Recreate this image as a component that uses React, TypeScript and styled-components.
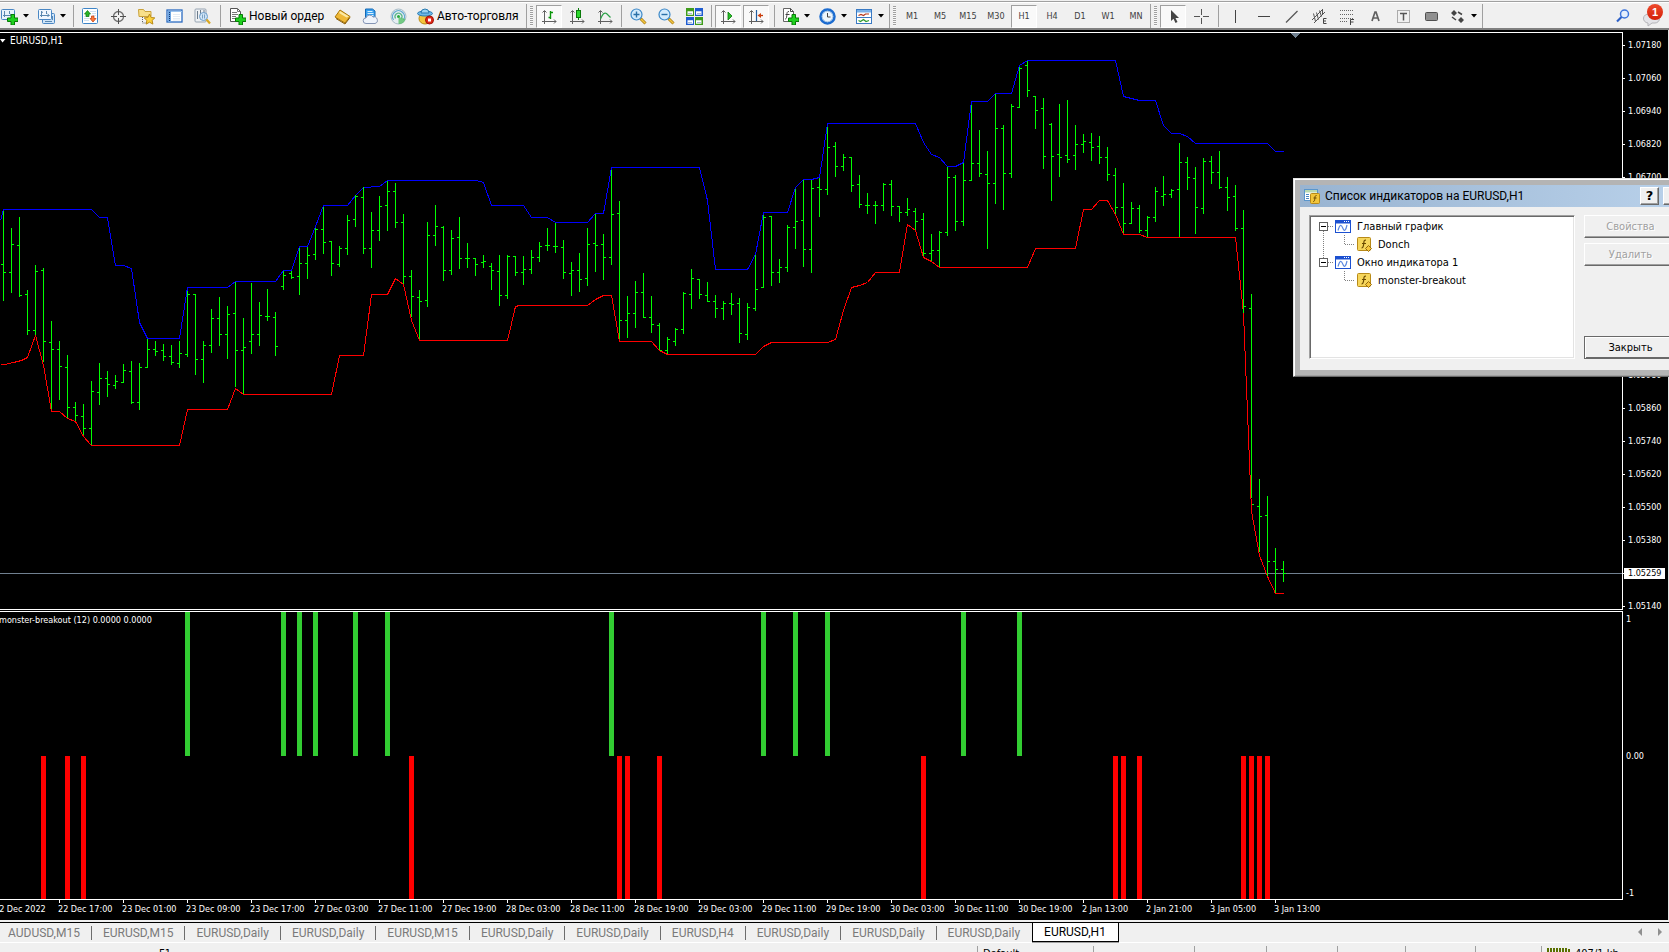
import React from "react";
import styled, { createGlobalStyle, css } from "styled-components";

const UI_FONT = `"DejaVu Sans Condensed", "DejaVu Sans", sans-serif`;
const TEXT_FONT = `Roboto, "Open Sans", sans-serif`;

const GlobalStyle = createGlobalStyle`
  *, *::before, *::after { box-sizing: border-box; }
  html, body { margin: 0; padding: 0; background: #f0f0f0; }
  body { font-family: ${UI_FONT}; font-size: 11px; color: #000; overflow: hidden; }
  button { font-family: inherit; font-size: inherit; color: inherit; }
  ul { list-style: none; margin: 0; padding: 0; }
  svg { display: block; flex: none; }
`;

/* ---------- chart data ---------- */

const BAR_STEP = 8;
const barX = (k: number) => 3 + BAR_STEP * k;

// high, low, open, close in plot rows
const BARS: number[][] = [
  [211,301,264,272],[228,293,272,244],[217,297,245,295],[290,335,294,330],[265,335,330,271],[268,362,270,341],
  [321,409,342,349],[341,400,349,366],[355,418,367,407],[402,421,407,415],[404,435,416,428],[381,445,428,391],
  [363,405,392,378],[371,397,378,384],[375,389,385,381],[364,383,382,370],[361,404,371,402],[363,410,402,367],
  [339,368,367,349],[341,356,349,351],[344,361,350,356],[345,365,356,362],[341,368,363,353],[291,357,354,294],
  [294,375,294,359],[341,383,359,345],[309,353,345,318],[297,346,318,334],[306,359,334,314],[282,387,313,350],
  [318,394,350,347],[283,354,341,334],[302,346,334,315],[289,321,316,316],[312,356,317,346],[271,290,286,275],
  [271,279,273,277],[248,295,276,263],[247,279,263,255],[228,260,254,229],[207,254,229,242],[241,276,241,263],
  [246,267,264,248],[215,255,248,220],[195,227,219,196],[187,254,197,248],[212,268,248,230],[196,241,230,206],
  [181,231,205,191],[183,228,191,222],[214,284,222,276],[270,317,276,296],[290,339,297,301],[222,307,300,235],
  [205,246,235,226],[226,281,227,270],[230,275,270,238],[217,269,237,258],[243,268,258,258],[258,276,258,264],
  [255,268,262,261],[263,290,266,270],[255,306,271,295],[255,299,295,256],[256,276,256,272],[256,285,272,269],
  [250,274,269,257],[242,262,257,246],[228,251,245,245],[223,253,246,246],[240,279,247,272],[262,296,273,270],
  [253,292,270,279],[228,286,278,244],[214,272,243,245],[234,280,244,257],[170,265,257,214],[201,339,213,320],
  [296,338,320,313],[281,328,313,292],[273,318,292,317],[296,333,317,324],[323,350,325,350],[337,354,350,339],
  [328,346,341,329],[292,334,329,293],[269,309,294,278],[279,299,279,294],[282,302,295,301],[295,318,301,308],
  [301,320,308,303],[293,315,303,304],[298,343,303,333],[303,340,334,307],[255,311,308,289],[215,288,287,217],
  [216,286,216,272],[259,283,272,267],[225,272,267,227],[189,249,227,221],[180,267,220,249],[180,273,249,188],
  [178,217,187,189],[127,195,189,147],[142,177,146,166],[154,171,166,157],[157,192,157,185],[175,208,184,204],
  [193,214,205,205],[201,224,205,205],[183,211,205,184],[180,216,184,206],[206,222,206,212],[198,216,212,209],
  [208,230,211,221],[213,256,219,253],[234,261,253,250],[231,267,250,232],[167,236,232,177],[175,231,177,221],
  [163,226,221,180],[105,181,180,163],[130,177,163,173],[151,249,174,183],[94,204,183,128],[125,210,128,173],
  [104,178,173,106],[67,108,107,68],[61,97,65,90],[96,129,96,110],[98,169,108,156],[123,201,124,156],
  [104,177,154,157],[100,163,155,159],[125,170,155,144],[134,153,144,141],[133,161,142,147],[136,164,146,157],
  [147,181,157,174],[168,214,175,207],[183,233,207,223],[202,224,223,208],[205,233,208,230],[216,237,230,217],
  [187,222,217,191],[176,206,196,194],[189,198,194,190],[143,237,189,162],[157,190,162,177],[167,234,178,207],
  [158,214,208,161],[156,184,161,172],[151,189,172,187],[177,211,187,197],[185,231,196,228],[210,313,228,306],
  [294,498,308,504],[479,552,506,516],[496,576,515,561],[548,593,561,569],[561,582,569,573],
];

const UPPER: number[][] = [
  [0,220],[3,209],[91,209],[99,217],[107,217],[115,265],[123,265],[131,268],[139,322],[147,338],[179,338],[187,287],
  [227,287],[235,281],[275,281],[283,270],[291,270],[299,246],[307,246],[315,226],[323,205],[347,205],[355,195],
  [363,187],[379,186],[387,180],[476,180],[483,182],[491,205],[523,205],[531,217],[547,217],[555,222],[587,222],
  [595,213],[603,213],[611,167],[699,167],[707,200],[715,269],[747,269],[755,254],[763,212],[787,212],[795,187],
  [803,179],[811,179],[819,177],[827,123],[915,123],[923,142],[931,154],[939,157],[947,166],[955,166],[963,162],
  [971,101],[987,101],[995,93],[1011,93],[1019,65],[1027,60],[1115,60],[1123,96],[1139,100],[1155,100],[1163,125],
  [1171,133],[1179,133],[1187,136],[1195,143],[1267,143],[1275,151],[1283,151],
];

const LOWER: number[][] = [
  [0,364],[4,364],[13,362],[21,360],[27,357],[35,335],[43,365],[51,411],[59,411],[67,418],[75,421],[83,436],[91,445],
  [179,445],[187,409],[227,409],[235,388],[243,394],[331,394],[339,355],[363,355],[371,294],[387,294],[395,278],
  [403,284],[411,320],[419,340],[507,340],[515,306],[519,305],[587,305],[595,299],[603,295],[611,295],[619,341],
  [651,341],[659,350],[667,354],[755,354],[763,346],[771,342],[827,342],[835,339],[843,310],[851,287],[859,285],
  [867,282],[875,272],[899,272],[907,224],[915,230],[923,257],[931,261],[939,267],[1027,267],[1035,248],[1075,248],
  [1083,209],[1091,209],[1099,200],[1107,200],[1115,214],[1123,234],[1139,234],[1147,237],[1235,237],[1243,313],
  [1251,511],[1259,555],[1267,576],[1275,593],[1283,593],
];

const UP_SIGNALS = [23, 35, 37, 39, 44, 48, 76, 95, 99, 103, 120, 127];
const DOWN_SIGNALS = [5, 8, 10, 51, 77, 78, 82, 115, 139, 140, 142, 155, 156, 157, 158];

const PRICES = [
  "1.07180","1.07060","1.06940","1.06820","1.06700","1.06580","1.06460","1.06340","1.06220",
  "1.06100","1.05980","1.05860","1.05740","1.05620","1.05500","1.05380","1.05259","1.05140",
];
const CURRENT_PRICE = "1.05259";

const TIMES = [
  "22 Dec 2022","22 Dec 17:00","23 Dec 01:00","23 Dec 09:00","23 Dec 17:00","27 Dec 03:00","27 Dec 11:00",
  "27 Dec 19:00","28 Dec 03:00","28 Dec 11:00","28 Dec 19:00","29 Dec 03:00","29 Dec 11:00","29 Dec 19:00",
  "30 Dec 03:00","30 Dec 11:00","30 Dec 19:00","2 Jan 13:00","2 Jan 21:00","3 Jan 05:00","3 Jan 13:00",
];

const TABS = [
  "AUDUSD,M15","EURUSD,M15","EURUSD,Daily","EURUSD,Daily","EURUSD,M15","EURUSD,Daily","EURUSD,Daily",
  "EURUSD,H4","EURUSD,Daily","EURUSD,Daily","EURUSD,Daily","EURUSD,H1",
];

const TIMEFRAMES = ["M1", "M5", "M15", "M30", "H1", "H4", "D1", "W1", "MN"];

/* ---------- layout ---------- */

const Page = styled.div`
  position: relative;
  display: flex;
  flex-direction: column;
  height: 100vh;
  overflow: hidden;
  background: #f0f0f0;
`;

const Toolbar = styled.header`
  flex: none;
  display: flex;
  height: 30px;
  padding-top: 3px;
  background: #f0f0f0;
  border-top: 1px solid #f0f0f0;
  border-bottom: 2px solid #808080;
  box-shadow: inset 0 1px #a0a0a0, inset 0 2px #fff;
`;

const Group = styled.div<{ $first?: boolean }>`
  flex: none;
  display: flex;
  align-items: center;
  border-right: 1px solid #a0a0a0;
  margin-left: ${(p) => (p.$first ? "-3px" : "0")};
`;

const Gripper = styled.span`
  width: 3px;
  height: 20px;
  margin: 0 2px 0 3px;
  background: repeating-linear-gradient(#a0a0a0 0 1px, #f8f8f8 1px 2px);
`;

const Separator = styled.span<{ $w: number }>`
  display: flex;
  justify-content: center;
  width: ${(p) => p.$w}px;
  height: 22px;
  &::before { content: ""; width: 1px; background: #a0a0a0; }
`;

const bare = css`
  display: flex;
  align-items: center;
  padding: 0;
  border: 0;
  background: none;
`;

const ToolButton = styled.button<{ $pressed?: boolean }>`
  ${bare}
  flex: none;
  justify-content: center;
  width: 26px;
  height: 23px;
  margin: 0 1px;
  font-size: 9px;
  color: #404040;
  ${(p) => p.$pressed && css`
    background: #f9f9f9;
    border: 1px solid;
    border-color: #a0a0a0 #fff #fff #a0a0a0;
  `}
`;

const DropButton = styled.button`
  ${bare}
  flex: none;
  width: 37px;
  height: 23px;
  padding-left: 4px;
  gap: 4px;
`;

const TextButton = styled.button<{ $w: number }>`
  ${bare}
  flex: none;
  width: ${(p) => p.$w}px;
  height: 23px;
  padding-left: 5px;
  gap: 3px;
  font-family: ${TEXT_FONT};
  font-size: 12px;
  white-space: nowrap;
`;

const ToolbarEnd = styled.div`
  display: flex;
  align-items: center;
  gap: 6px;
  margin-left: auto;
  padding-right: 6px;
`;

const Badged = styled.button`
  ${bare}
  position: relative;
  width: 21px;
  height: 24px;
`;

const Badge = styled.span`
  position: absolute;
  top: 0;
  right: 0;
  width: 16px;
  height: 16px;
  border-radius: 8px;
  background: linear-gradient(#ee4a2c, #d42008);
  color: #fff;
  font: bold 11px/16px "Liberation Sans", sans-serif;
  text-align: center;
`;

const ChartWindow = styled.main`
  flex: 1;
  min-height: 0;
  display: grid;
  grid-template-columns: minmax(0, 1fr) 45px;
  grid-template-rows: 580px minmax(0, 1fr) 20px;
  background: #000;
  color: #fff;
  font-size: 9px;
  border-right: 1px solid #e3e3e3;
  overflow: hidden;
`;

const PricePlot = styled.section`
  position: relative;
  margin-top: 2px;
  border: solid #fff;
  border-width: 1px 1px 1px 0;
  overflow: hidden;
`;

const SignalPlot = styled.section`
  position: relative;
  margin-top: 1px;
  border: solid #fff;
  border-width: 1px 1px 1px 0;
  overflow: hidden;
`;

const PlotSvg = styled.svg`
  width: 100%;
  height: 100%;
`;

const SymbolCaption = styled.button`
  ${bare}
  position: absolute;
  top: 1px;
  left: 0;
  gap: 4px;
  font-size: 10px;
  line-height: 13px;
`;

const SignalCaption = styled.span`
  position: absolute;
  top: 2px;
  left: -1px;
  line-height: 13px;
  white-space: nowrap;
`;

const PriceAxis = styled.ul`
  margin-top: -1px;
`;

const PriceRow = styled.li<{ $current: boolean }>`
  display: flex;
  align-items: center;
  height: 33px;
  &::before { content: ""; width: 2px; height: 1px; background: #fff; }
  span {
    margin-left: -1px;
    padding: 0 4px;
    line-height: 11px;
    ${(p) => p.$current && css`background: #fff; color: #000;`}
  }
`;

const SignalAxis = styled.div`
  display: flex;
  flex-direction: column;
  justify-content: space-between;
  padding: 3px 0 1px 3px;
  line-height: 12px;
`;

const TimeAxis = styled.ul`
  grid-column: 1 / -1;
  display: flex;
  margin-left: -5px;
  overflow: hidden;
`;

const TimeMark = styled.li`
  flex: none;
  width: 64px;
  white-space: nowrap;
  line-height: 12px;
  &::before { content: ""; display: block; width: 1px; height: 3px; background: #fff; }
  span { display: block; margin-left: -1px; }
`;

const TabBar = styled.nav`
  flex: none;
  display: flex;
  height: 23px;
  padding: 0 6px 0 0;
  background: linear-gradient(#f0f0f0 0 2px, #000 2px 3px, #f0f0f0 3px 22px, #fff 22px);
  font-family: ${TEXT_FONT};
  font-size: 12px;
`;

const Tab = styled.button<{ $active: boolean; $last: boolean }>`
  ${bare}
  height: 19px;
  margin-top: 3px;
  padding: 0 12px 0 11px;
  color: #7a7a7a;
  white-space: nowrap;
  &::after {
    content: "";
    width: 1px;
    height: 14px;
    margin: 0 -12px 0 11px;
    background: ${(p) => (p.$last ? "transparent" : "#6d6d6d")};
  }
  &:first-child { padding-left: 8px; }
  ${(p) => p.$active && css`
    padding: 0 12px 0 11px;
    color: #000;
    background: #fff;
    border: solid #000;
    border-width: 0 1px 1px 1px;
    box-shadow: 0 1px #a0a0a0;
    &::after { display: none; }
  `}
`;

const TabScroll = styled.div`
  display: flex;
  align-items: center;
  gap: 12px;
  margin-left: auto;
  button { ${bare} }
`;

const StatusBar = styled.footer`
  flex: none;
  display: flex;
  height: 9px;
  padding-top: 3px;
  overflow: hidden;
`;

const StatusCell = styled.div<{ $w?: number; $pad: number }>`
  flex: ${(p) => (p.$w ? `0 0 ${p.$w}px` : "1 1 0")};
  display: flex;
  gap: 5px;
  height: 18px;
  padding: 2px 0 0 ${(p) => p.$pad}px;
  line-height: 12px;
  border-left: 1px solid ${(p) => (p.$w ? "#a0a0a0" : "transparent")};
  white-space: nowrap;
`;

/* ---------- indicator list window ---------- */

const Dialog = styled.div`
  position: absolute;
  top: 178px;
  right: -24px;
  display: flex;
  flex-direction: column;
  width: 400px;
  padding: 6px;
  background: #b4b4b4;
  border: 1px solid;
  border-color: #e3e3e3 #696969 #696969 #e3e3e3;
  box-shadow: inset 1px 1px #fff, inset -1px -1px #a0a0a0;
`;

const TitleBar = styled.div`
  display: flex;
  align-items: center;
  gap: 4px;
  height: 22px;
  padding: 0 4px;
  background: linear-gradient(90deg, #99b4d1, #b9d1ea);
  font-family: ${TEXT_FONT};
  font-size: 12px;
  h2 { flex: 1; margin: 0; font: inherit; }
`;

const raised = css`
  background: #f0f0f0;
  border: 1px solid;
  border-color: #fff #696969 #696969 #fff;
  box-shadow: inset -1px -1px #a0a0a0;
`;

const CaptionButton = styled.button`
  ${raised}
  width: 19px;
  height: 18px;
  padding: 0;
  font: bold 13px/14px "DejaVu Sans", sans-serif;
`;

const DialogBody = styled.div`
  display: flex;
  gap: 9px;
  padding: 8px 9px 11px;
  background: #f0f0f0;
`;

const Tree = styled.ul`
  flex: 1;
  height: 144px;
  padding: 1px 0 0 8px;
  background: #fff;
  border: 1px solid;
  border-color: #a0a0a0 #fff #fff #a0a0a0;
  box-shadow: inset 1px 1px #696969, inset -1px -1px #e3e3e3;
`;

const TreeRow = styled.li`
  display: flex;
  align-items: center;
  height: 18px;
  white-space: nowrap;
`;

const TreeLabel = styled.span`
  margin-left: 6px;
`;

const DialogButtons = styled.div`
  display: flex;
  flex-direction: column;
  gap: 5px;
  width: 93px;
`;

const DialogButton = styled.button<{ $default?: boolean }>`
  ${raised}
  height: 23px;
  padding: 0;
  &:disabled { color: #a0a0a0; text-shadow: 1px 1px #fff; }
  ${(p) => p.$default && css`
    margin-top: auto;
    border-color: #696969;
    box-shadow: inset 1px 1px #fff, inset -1px -1px #696969;
  `}
`;

/* ---------- icons ---------- */

const Ic = ({ children, w = 17 }: { children: React.ReactNode; w?: number }) => (
  <svg width={w} height={17} viewBox={`0 0 ${w} 17`} fill="none" aria-hidden="true">{children}</svg>
);

const Arrow = () => (
  <svg width="7" height="4" viewBox="0 0 7 4" aria-hidden="true"><path d="M1 0h6L4 3.5z" fill="#000" /></svg>
);

const Plus = () => (
  <path d="M10 6.500h3.500v3.500h3.500v3.500h-3.500v3.500H10v-3.500H6.500V10H10z" fill="#1fd01f" stroke="#067a06" />
);

const Axes = ({ children }: { children?: React.ReactNode }) => (
  <Ic>
    <path d="M3.500 16V3M1 13.500h14M1.500 4.500l2-2 2 2M13 11.500l2 2-2 2" stroke="#606060" />
    {children}
  </Ic>
);

const NewChartIcon = () => (
  <Ic>
    <rect x=".5" y="1.500" width="13" height="10" rx="1" fill="#eaf4fd" stroke="#4a87c4" />
    <path d="M3.500 3v6M2 7.500h9M9 6l2 1.500M8.500 3v3" stroke="#5a88b0" />
    <Plus />
  </Ic>
);
const WindowsIcon = () => (
  <Ic>
    <rect x="4.500" y="5.500" width="12" height="10" rx="1" fill="#cfe4f8" stroke="#4a87c4" />
    <rect x=".5" y="1.500" width="13" height="10" rx="1" fill="#f0f8ff" stroke="#4a87c4" />
    <path d="M3.500 3v6M2 7.500h9M9.500 6l2 1.500-2 1M3 5l2-1M8.500 3v3M7 13.500h7M14.500 8v4" stroke="#5a88b0" />
  </Ic>
);
const MarketIcon = () => (
  <Ic>
    <rect x=".5" y=".5" width="15" height="15" rx="1" fill="#fff" stroke="#3d85c8" />
    <path d="M8 3.500h6M10 5.500h4M2 8.500h4M2 10.500h5M2 12.500h5M11 7.500h3" stroke="#cfe0f0" />
    <path d="M2.500 6L5.500 2.500l3 3.500h-1.500v2.500h-3V6z" fill="#28b428" stroke="#0b7a0b" strokeWidth=".7" />
    <path d="M8 10.500h1.500V8h2.500v2.500h2L11 14z" fill="#ff7a3c" stroke="#c03a08" strokeWidth=".7" />
  </Ic>
);
const TargetIcon = () => (
  <Ic>
    <circle cx="8.500" cy="8.500" r="5" stroke="#707070" strokeWidth="1.300" />
    <path d="M8.500 1v6M8.500 10v6M1 8.500h6M10 8.500h6" stroke="#505050" />
  </Ic>
);
const FolderIcon = () => (
  <Ic>
    <path d="M.5 1.500h5l1.500 2h6v5h-12z" fill="#f8e08a" stroke="#c9a23c" />
    <path d="M4.500 9v6h4" stroke="#606060" strokeDasharray="1 1" />
    <path d="M11.500 6l1.700 3.500 3.600.4-2.700 2.500.8 3.700-3.400-1.900-3.300 1.900.7-3.700L6.200 9.900l3.700-.4z" fill="#fbd13c" stroke="#b98a15" />
  </Ic>
);
const NavigatorIcon = () => (
  <Ic>
    <rect x="1" y="2" width="15" height="12" fill="#fff" stroke="#2a6ac0" strokeWidth="1.300" />
    <path d="M2 3.500h14" stroke="#9cc4ee" />
    <rect x="2" y="3" width="3" height="11" fill="#6ea6e2" />
    <path d="M3.500 4v9" stroke="#123a78" strokeDasharray="1 1" />
    <path d="M7 6.500h7M7 8.500h7M7 10.500h7M7 12h7" stroke="#e4ecf4" />
  </Ic>
);
const TesterIcon = () => (
  <Ic>
    <rect x="1" y="1" width="11" height="13" rx="1" fill="#eef1f4" stroke="#97a4b2" />
    <path d="M3.500 3v8M6.500 2v6M10 2v5" stroke="#6c7c8c" />
    <circle cx="9.500" cy="8.500" r="4" fill="#cfe6fa" fillOpacity=".9" stroke="#6c9cc8" />
    <path d="M8.500 6.500v4M10.500 6.500v4" stroke="#7aa2c4" />
    <path d="M12.500 11.500l3.500 4" stroke="#d9a823" strokeWidth="2.200" />
  </Ic>
);
const OrderIcon = () => (
  <Ic>
    <path d="M1.500.5h7l3 3v10h-10z" fill="#fff" stroke="#555" />
    <path d="M3 4.500h5M3 6.500h6M3 8.500h4M3 10.500h4M8.500.5v3h3" stroke="#777" />
    <Plus />
  </Ic>
);
const GoldIcon = () => (
  <Ic>
    <path d="M1 9l5-7 10 6.500-5 6.500z" fill="#efb836" stroke="#a87608" />
    <path d="M2 10.500L11 16l5-6.500" stroke="#8a5c04" />
    <path d="M6 3l9 5.500-2.500 1L5 5z" fill="#fde9a2" />
  </Ic>
);
const CloudIcon = () => (
  <Ic>
    <path d="M3.500 1h7l2.500 2v6.500h-9.500z" fill="#38a0f0" stroke="#1468b4" />
    <path d="M5.500 3.500h5M5.500 5.500h6M5.500 7.500h6" stroke="#d8f0ff" />
    <path d="M4 15.500a2.800 2.800 0 010-5.600 3.800 3.800 0 017-.8 3.300 3.300 0 012 6.400z" fill="#eef3fb" stroke="#8494b4" />
  </Ic>
);
const SignalIcon = () => (
  <Ic>
    <circle cx="8.500" cy="8.500" r="7.500" fill="#e6eef2" stroke="#a8bcc8" />
    <path d="M3.500 12a6 6 0 1110 0" stroke="#62aad0" strokeWidth="1.300" />
    <path d="M5.500 10.500a3.500 3.500 0 116 0" stroke="#5cb88c" strokeWidth="1.300" />
    <circle cx="8.500" cy="8.500" r="1.500" fill="#28a83c" />
    <path d="M8.500 9v7c4 0 6-2 7-5z" fill="#58c068" fillOpacity=".8" />
  </Ic>
);
const AutoIcon = () => (
  <Ic>
    <ellipse cx="8" cy="10.500" rx="6" ry="5.500" fill="#f4c43c" stroke="#b98a15" />
    <ellipse cx="8" cy="5.500" rx="7.500" ry="2.500" fill="#6cb8e8" stroke="#2a7ab0" />
    <path d="M4 5a4 4 0 018 0z" fill="#9ad4f4" stroke="#2a7ab0" />
    <circle cx="12.500" cy="12" r="4" fill="#e02818" stroke="#a01408" />
    <rect x="11" y="10.500" width="3" height="3" fill="#fff" />
  </Ic>
);
const Magnifier = ({ plus }: { plus?: boolean }) => (
  <Ic>
    <path d="M10.500 10.500l5 5" stroke="#a87a10" strokeWidth="3" />
    <path d="M11 11l4.300 4.300" stroke="#f2c744" strokeWidth="1.600" />
    <circle cx="6.500" cy="6.500" r="5.500" fill="#d2eafc" stroke="#3c88c8" strokeWidth="1.200" />
    <path d={plus ? "M3.500 6.500h6M6.500 3.500v6" : "M3.500 6.500h6"} stroke="#2a70a8" strokeWidth="1.400" />
  </Ic>
);
const TileIcon = () => (
  <Ic>
    <rect x="0" y="0" width="8" height="8" fill="#3f9c1c" /><rect x="9" y="0" width="8" height="8" fill="#1f5cd0" />
    <rect x="0" y="9" width="8" height="8" fill="#1f5cd0" /><rect x="9" y="9" width="8" height="8" fill="#3f9c1c" />
    <path d="M1.500 5h5.500M10 5h5.500M1.500 14h5.500M10 14h5.500" stroke="#fff" strokeWidth="3.500" />
    <path d="M2 5.500h4M11 5.500h4M2 14.500h4M11 14.500h4" stroke="#a8bcd8" />
  </Ic>
);
const AddIndicatorIcon = () => (
  <Ic>
    <path d="M1.500.5h7l3 3v10h-10z" fill="#fff" stroke="#666" />
    <path d="M7 3.500c-2 0-2 1-2.200 4S4 11 3 11M3.500 6.500h4M8.500.5v3h3" stroke="#444" />
    <Plus />
  </Ic>
);
const ClockIcon = () => (
  <Ic>
    <circle cx="8.500" cy="8.500" r="7" fill="#eef6fd" stroke="#1c6cd0" strokeWidth="2.500" />
    <circle cx="8.500" cy="8.500" r="5.300" stroke="#90b8e0" strokeWidth=".8" />
    <path d="M8.500 5v4h3" stroke="#444" />
  </Ic>
);
const TemplateIcon = () => (
  <Ic>
    <rect x=".5" y="1.500" width="15" height="14" fill="#fff" stroke="#3a7ac4" />
    <rect x="1" y="2" width="14" height="2.500" fill="#7ab0e8" />
    <path d="M1 9.500h14" stroke="#3a7ac4" />
    <path d="M2.500 7.500l2.500-1 2.500 1 2-1.500h3.500" stroke="#b43418" strokeWidth="1.200" />
    <path d="M2.500 12.500l2 1 3-2 2.500 2 3-1" stroke="#2c9a2c" strokeWidth="1.200" />
  </Ic>
);
const ChannelIcon = () => (
  <Ic>
    <path d="M1 12L12 1M3 15L14 4M2.500 5.500l2 8M5.500 4.500l2 7M8.500 2.500l2 6M11.500 1v6" stroke="#555" />
    <path d="M15.500 10.500h-3v5h3M12.500 13h2.500" stroke="#444" />
  </Ic>
);
const FiboIcon = () => (
  <Ic>
    <path d="M1 2.500h13M1 6.500h13M1 10.500h13M1 13.500h8" stroke="#666" strokeDasharray="1 1" />
    <path d="M11.500 17v-5.500h3.500M11.500 14h3" stroke="#444" />
  </Ic>
);
const LabelIcon = () => (
  <Ic>
    <rect x="2.500" y="2.500" width="12" height="12" stroke="#666" strokeDasharray="1 1" />
    <path d="M5 5.500h7M8.500 5.500v7" stroke="#555" strokeWidth="1.500" />
  </Ic>
);
const LetterIcon = () => (
  <Ic><path d="M5 13l3-9h1l3 9M6 10h5" stroke="#606060" strokeWidth="1.700" /></Ic>
);
const ShapesIcon = () => (
  <Ic>
    <path d="M5 2l3 3-3 3-3-3zM12 9l3 3-3 3-3-3z" fill="#444" />
    <path d="M3 9l4 3M9 4l4 2.500" stroke="#444" strokeWidth="1.500" />
  </Ic>
);
const DialogIcon = () => (
  <Ic>
    <rect x=".5" y="1.500" width="13" height="11" fill="#fff" stroke="#5a96cc" />
    <rect x="1" y="2" width="12" height="2.500" fill="#b8d8b0" />
    <path d="M2 6.500h3M2 8.500h3M2 10.500h3" stroke="#4a87c4" />
    <rect x="6.500" y="5.500" width="9" height="10" rx="1" fill="#f2c63c" stroke="#b88a18" />
    <path d="M12.500 7.500c-1.500 0-1.500 1-1.700 3s-.3 3-1.500 3M9.500 10h3" stroke="#6a4a00" />
  </Ic>
);
const WindowIcon = () => (
  <Ic w={16}>
    <rect x=".5" y="2.500" width="15" height="12" fill="#fff" stroke="#1c50d0" />
    <rect x="0" y="2" width="16" height="3.500" fill="#1c50d0" />
    <path d="M9 3.500h6" stroke="#fff" strokeDasharray="1 1" />
    <path d="M3 12.500c2-7 3.500-6 5-2s3 1 4-3.500" stroke="#5c88e0" strokeWidth="1.200" />
  </Ic>
);
const FunctionIcon = () => (
  <Ic w={15}>
    <rect x=".5" y="1.500" width="13" height="13" rx="1" fill="#f6d65c" stroke="#b88a18" />
    <path d="M9 4c-2 0-2 1-2.300 4S6 12 4.500 12M5 7.500h4" stroke="#6a4a00" strokeWidth="1.200" />
    <path d="M11.500 9.500l3 3-3 3-3-3z" fill="#f6c63c" stroke="#94690c" />
  </Ic>
);
const Expander = ({ below }: { below?: boolean }) => (
  <svg width="17" height="18" viewBox="0 0 17 18" fill="none" shapeRendering="crispEdges" aria-hidden="true">
    <path d={below ? "M5.500 14v4M10 9.500h6" : "M5.500 0v5M10 9.500h6"} stroke="#808080" strokeDasharray="1 1" />
    <rect x="1.500" y="5.500" width="8" height="8" fill="#fff" stroke="#606060" />
    <path d="M3 9.500h5" stroke="#000" />
  </svg>
);
const Branch = ({ trunk }: { trunk?: boolean }) => (
  <svg width="39" height="18" viewBox="0 0 39 18" fill="none" shapeRendering="crispEdges" aria-hidden="true">
    <path d={`M26.500 0v10M27 9.500h10${trunk ? "M5.500 0v18" : ""}`} stroke="#808080" strokeDasharray="1 1" />
  </svg>
);

/* ---------- pieces ---------- */

const pts = (list: number[][]) => list.map(([x, y]) => `${x + 0.5},${y + 0.5}`).join(" ");

const barsPath = BARS.map(([h, l, o, c], k) => {
  const x = barX(k);
  return `M${x} ${h}h1V${l}h-1zM${x - 2} ${o}h2v1h-2zM${x + 1} ${c}h2v1h-2z`;
}).join("");

const PriceChart = () => (
  <PlotSvg shapeRendering="crispEdges" role="img" aria-label="EURUSD,H1">
    <g transform="translate(0,-33)" fill="none">
      <path d="M0 573.500H4000" stroke="#708090" />
      <polyline points={pts(UPPER)} stroke="#0000ff" />
      <polyline points={pts(LOWER)} stroke="#ff0000" />
      <path d={barsPath} fill="#00ff00" />
      <path d="M1291 33h9l-4.500 5z" fill="#708090" />
    </g>
  </PlotSvg>
);

const SignalChart = () => (
  <PlotSvg shapeRendering="crispEdges" role="img" aria-label="monster-breakout">
    {UP_SIGNALS.map((k) => <rect key={k} x={barX(k) - 2} y="0" width="5" height="50%" fill="#32cd32" />)}
    {DOWN_SIGNALS.map((k) => <rect key={k} x={barX(k) - 2} y="50%" width="5" height="50%" fill="#ff0000" />)}
  </PlotSvg>
);

const Tool = ({ label, pressed, children }: { label: string; pressed?: boolean; children: React.ReactNode }) => (
  <ToolButton type="button" aria-label={label} aria-pressed={pressed} $pressed={pressed}>{children}</ToolButton>
);
const Drop = ({ label, children }: { label: string; children: React.ReactNode }) => (
  <DropButton type="button" aria-label={label} aria-haspopup="menu">{children}<Arrow /></DropButton>
);

const MainToolbar = () => (
  <Toolbar>
    <Group $first>
      <Drop label="Новый график"><NewChartIcon /></Drop>
      <Drop label="Профили"><WindowsIcon /></Drop>
      <Separator $w={5} />
      <Tool label="Обзор рынка"><MarketIcon /></Tool>
      <Tool label="Окно данных"><TargetIcon /></Tool>
      <Tool label="Навигатор"><FolderIcon /></Tool>
      <Tool label="Терминал"><NavigatorIcon /></Tool>
      <Tool label="Тестер стратегий"><TesterIcon /></Tool>
      <Separator $w={8} />
      <TextButton type="button" $w={104}><OrderIcon />Новый ордер</TextButton>
      <Tool label="MetaEditor"><GoldIcon /></Tool>
      <Tool label="VPS"><CloudIcon /></Tool>
      <Tool label="Сигналы"><SignalIcon /></Tool>
      <TextButton type="button" $w={114}><AutoIcon />Авто-торговля</TextButton>
    </Group>
    <Group>
      <Gripper />
      <Tool label="Бары" pressed><Axes><path d="M9.500 3v8M7.500 9.500h2M9.500 4.500h2.500" stroke="#0a960a" strokeWidth="1.400" /></Axes></Tool>
      <Tool label="Японские свечи">
        <Axes><path d="M9.500 0v12" stroke="#0a7a0a" /><rect x="7.500" y="2.500" width="4" height="7" fill="#2cd82c" stroke="#0a7a0a" /></Axes>
      </Tool>
      <Tool label="Линия"><Axes><path d="M3.500 11c2-5 4-7 6-5.500l4 4" stroke="#2ca048" strokeWidth="1.200" /></Axes></Tool>
      <Separator $w={5} />
      <Tool label="Увеличить"><Magnifier plus /></Tool>
      <Tool label="Уменьшить"><Magnifier /></Tool>
      <Tool label="Окна мозаикой"><TileIcon /></Tool>
      <Separator $w={6} />
      <Tool label="Автопрокрутка" pressed><Axes><path d="M8 4v8l4-4z" fill="#28c028" stroke="#0a7a0a" strokeWidth=".8" /></Axes></Tool>
      <Tool label="Сдвиг графика" pressed>
        <Axes><path d="M8.500 2v11" stroke="#205ca0" strokeWidth="1.200" /><path d="M12 7.500h3" stroke="#c03a08" strokeWidth="1.300" /><path d="M13 5v5l-3.500-2.500z" fill="#d04010" /></Axes>
      </Tool>
      <Separator $w={8} />
      <Drop label="Индикаторы"><AddIndicatorIcon /></Drop>
      <Drop label="Периоды"><ClockIcon /></Drop>
      <Drop label="Шаблоны"><TemplateIcon /></Drop>
    </Group>
    <Group>
      <Gripper />
      {TIMEFRAMES.map((t) => (
        <ToolButton key={t} type="button" $pressed={t === "H1"} aria-pressed={t === "H1"}>{t}</ToolButton>
      ))}
    </Group>
    <Group>
      <Gripper />
      <Tool label="Курсор" pressed><Ic><path d="M6 2v11l2.500-2.300L10.500 15l2-1-2-4h3.500z" fill="#444" /></Ic></Tool>
      <Tool label="Перекрестие"><Ic><path d="M8.500 1v6M8.500 10v6M1 8.500h6M10 8.500h6" stroke="#555" /></Ic></Tool>
      <Separator $w={6} />
      <Tool label="Вертикальная линия"><Ic><path d="M8.500 2v13" stroke="#444" /></Ic></Tool>
      <Tool label="Горизонтальная линия"><Ic><path d="M3 8.500h12" stroke="#444" /></Ic></Tool>
      <Tool label="Трендовая линия"><Ic><path d="M3 14.500L14.500 3" stroke="#555" strokeWidth="1.200" /></Ic></Tool>
      <Tool label="Канал"><ChannelIcon /></Tool>
      <Tool label="Фибоначчи"><FiboIcon /></Tool>
      <Tool label="Текст"><LetterIcon /></Tool>
      <Tool label="Метка"><LabelIcon /></Tool>
      <Tool label="Прямоугольник"><Ic><rect x="2.500" y="4.500" width="12" height="8" rx="1" fill="#909090" stroke="#505050" /></Ic></Tool>
      <Drop label="Стрелки"><ShapesIcon /></Drop>
    </Group>
    <ToolbarEnd>
      <ToolButton type="button" aria-label="Поиск">
        <Ic><circle cx="10.500" cy="6" r="4" fill="#e4eefc" stroke="#3c74dc" strokeWidth="1.500" /><path d="M7.500 9L3 13.500" stroke="#2c60c8" strokeWidth="2.200" /></Ic>
      </ToolButton>
      <Badged type="button" aria-label="Сообщения">
        <svg width="18" height="24" viewBox="0 0 18 24" fill="none" aria-hidden="true">
          <path d="M7 10h6a4 4 0 010 9h-3l-4 3v-3a5 4.500 0 011-9z" fill="#e4e4e8" stroke="#b4b4b8" />
        </svg>
        <Badge>1</Badge>
      </Badged>
    </ToolbarEnd>
  </Toolbar>
);

const IndicatorDialog = () => (
  <Dialog role="dialog" aria-labelledby="indicators-title">
    <TitleBar>
      <DialogIcon />
      <h2 id="indicators-title">Список индикаторов на EURUSD,H1</h2>
      <CaptionButton type="button">?</CaptionButton>
      <CaptionButton type="button" aria-label="Закрыть окно" />
    </TitleBar>
    <DialogBody>
      <Tree>
        <TreeRow><Expander below /><WindowIcon /><TreeLabel>Главный график</TreeLabel></TreeRow>
        <TreeRow><Branch trunk /><FunctionIcon /><TreeLabel>Donch</TreeLabel></TreeRow>
        <TreeRow><Expander /><WindowIcon /><TreeLabel>Окно индикатора 1</TreeLabel></TreeRow>
        <TreeRow><Branch /><FunctionIcon /><TreeLabel>monster-breakout</TreeLabel></TreeRow>
      </Tree>
      <DialogButtons>
        <DialogButton type="button" disabled>Свойства</DialogButton>
        <DialogButton type="button" disabled>Удалить</DialogButton>
        <DialogButton type="button" $default>Закрыть</DialogButton>
      </DialogButtons>
    </DialogBody>
  </Dialog>
);

export default function App() {
  return (
    <Page>
      <GlobalStyle />
      <MainToolbar />
      <ChartWindow>
        <PricePlot>
          <PriceChart />
          <SymbolCaption type="button">
            <svg width="6" height="4" viewBox="0 0 6 4" aria-hidden="true"><path d="M0 0h5.500L2.500 3.500z" fill="#fff" /></svg>
            EURUSD,H1
          </SymbolCaption>
        </PricePlot>
        <PriceAxis>
          {PRICES.map((p) => <PriceRow key={p} $current={p === CURRENT_PRICE}><span>{p}</span></PriceRow>)}
        </PriceAxis>
        <SignalPlot>
          <SignalChart />
          <SignalCaption>monster-breakout (12) 0.0000 0.0000</SignalCaption>
        </SignalPlot>
        <SignalAxis><span>1</span><span>0.00</span><span>-1</span></SignalAxis>
        <TimeAxis>{TIMES.map((t) => <TimeMark key={t}><span>{t}</span></TimeMark>)}</TimeAxis>
      </ChartWindow>
      <TabBar>
        {TABS.map((t, i) => (
          <Tab key={i} type="button" $active={i === TABS.length - 1} $last={i === TABS.length - 2}>{t}</Tab>
        ))}
        <TabScroll>
          <button type="button" aria-label="Назад"><svg width="7" height="8" viewBox="0 0 7 8"><path d="M5 0v8L1 4z" fill="#909090" /></svg></button>
          <button type="button" aria-label="Вперёд"><svg width="7" height="8" viewBox="0 0 7 8"><path d="M2 0v8l4-4z" fill="#909090" /></svg></button>
        </TabScroll>
      </TabBar>
      <StatusBar>
        <StatusCell $pad={158}>F1</StatusCell>
        <StatusCell $w={116} $pad={5}>Default</StatusCell>
        <StatusCell $w={101} $pad={0} />
        <StatusCell $w={72} $pad={0} />
        <StatusCell $w={71} $pad={0} />
        <StatusCell $w={68} $pad={0} />
        <StatusCell $w={70} $pad={0} />
        <StatusCell $w={66} $pad={0} />
        <StatusCell $w={128} $pad={5}>
          <svg width="23" height="12" viewBox="0 0 23 12" shapeRendering="crispEdges" aria-hidden="true">
            <path d="M0 0h2v12H0zM3 0h2v12H3zM6 0h2v12H6zM9 0h2v12H9zM12 0h2v12h-2zM15 0h2v12h-2zM18 0h2v12h-2zM21 1h2v11h-2z" fill="#5a7000" />
          </svg>
          407/1 kb
        </StatusCell>
      </StatusBar>
      <IndicatorDialog />
    </Page>
  );
}
